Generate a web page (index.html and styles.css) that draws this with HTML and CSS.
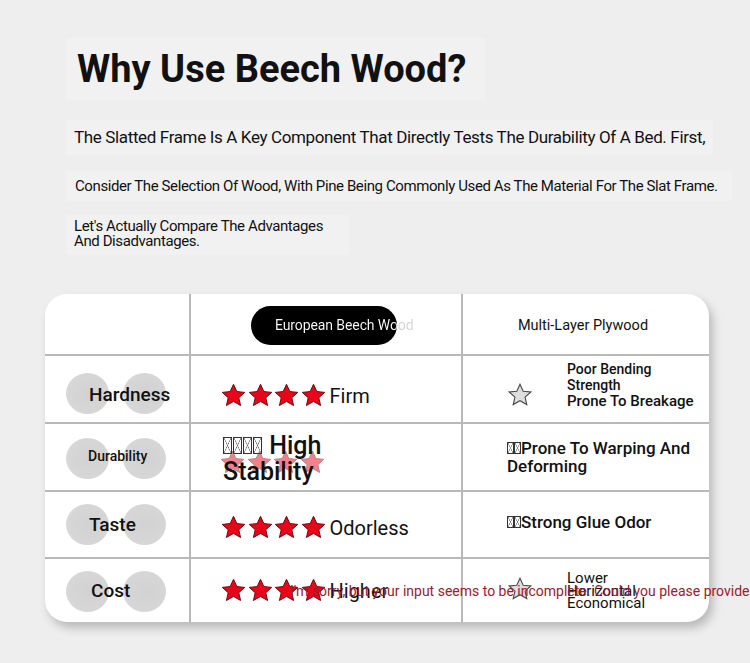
FILE: index.html
```html
<!DOCTYPE html>
<html lang="en">
<head>
<meta charset="utf-8">
<title>Why Use Beech Wood?</title>
<link rel="stylesheet" href="styles.css">
</head>
<body>
<svg class="defs" width="0" height="0" aria-hidden="true">
  <defs>
    <symbol id="star" viewBox="0 0 24 24">
      <path d="M12 1.2l3.2 7 7.6.8-5.7 5.1 1.7 7.5L12 17.7l-6.8 3.9 1.7-7.5L1.2 9l7.6-.8z"/>
    </symbol>
  </defs>
</svg>
<main class="page">
  <h1 class="title">Why Use Beech Wood?</h1>
  <p class="p1">The Slatted Frame Is A Key Component That Directly Tests The Durability Of A Bed. First,</p>
  <p class="p2">Consider The Selection Of Wood, With Pine Being Commonly Used As The Material For The Slat Frame.</p>
  <p class="p3">Let's Actually Compare The Advantages<br>And Disadvantages.</p>

  <section class="card">
    <div class="cell head c1"></div>
    <div class="cell head c2"><span class="pill"><span class="pill-text">European Beech Wood</span></span></div>
    <div class="cell head c3">Multi-Layer Plywood</div>

    <div class="cell label r1"><span class="blob b1"></span><span class="blob b2"></span><span class="lt big">Hardness</span></div>
    <div class="cell rate r1">
      <span class="stars"><svg class="st red"><use href="#star"/></svg><svg class="st red"><use href="#star"/></svg><svg class="st red"><use href="#star"/></svg><svg class="st red"><use href="#star"/></svg></span>
      <span class="rt">Firm</span>
    </div>
    <div class="cell ply r1">
      <svg class="st gray"><use href="#star"/></svg>
      <span class="ptxt"><span class="sm">Poor Bending<br>Strength</span><br><span class="md">Prone To Breakage</span></span>
    </div>

    <div class="cell label r2"><span class="blob b1"></span><span class="blob b2"></span><span class="lt small">Durability</span></div>
    <div class="cell rate r2">
      <span class="stars faded"><svg class="st red"><use href="#star"/></svg><svg class="st red"><use href="#star"/></svg><svg class="st red"><use href="#star"/></svg><svg class="st red"><use href="#star"/></svg></span>
      <span class="hs"><span class="tofu"></span><span class="tofu"></span><span class="tofu"></span><span class="tofu"></span> High<br>Stability</span>
    </div>
    <div class="cell ply r2"><span class="pt17"><span class="tofu s"></span><span class="tofu s"></span>Prone To Warping And<br>Deforming</span></div>

    <div class="cell label r3"><span class="blob b1"></span><span class="blob b2"></span><span class="lt big">Taste</span></div>
    <div class="cell rate r3">
      <span class="stars"><svg class="st red"><use href="#star"/></svg><svg class="st red"><use href="#star"/></svg><svg class="st red"><use href="#star"/></svg><svg class="st red"><use href="#star"/></svg></span>
      <span class="rt">Odorless</span>
    </div>
    <div class="cell ply r3"><span class="pt17"><span class="tofu s"></span><span class="tofu s"></span>Strong Glue Odor</span></div>

    <div class="cell label r4"><span class="blob b1"></span><span class="blob b2"></span><span class="lt big cost">Cost</span></div>
    <div class="cell rate r4">
      <span class="stars"><svg class="st red"><use href="#star"/></svg><svg class="st red"><use href="#star"/></svg><svg class="st red"><use href="#star"/></svg><svg class="st red"><use href="#star"/></svg></span>
      <span class="rt">Higher</span>
    </div>
    <div class="cell ply r4">
      <svg class="st gray"><use href="#star"/></svg>
      <span class="low">Lower<br>Horizontal<br>Economical</span>
    </div>

    <p class="err">I'm sorry, but your input seems to be incomplete. Could you please provide more details?</p>
  </section>
</main>
</body>
</html>
```

FILE: styles.css
```css
html, body {
  margin: 0;
  padding: 0;
  background: #eeeeee;
  overflow: hidden;
}
body {
  width: 750px;
  height: 663px;
  font-family: Roboto, "Liberation Sans", sans-serif;
  color: #111;
}
.defs { position: absolute; width: 0; height: 0; }

.page {
  padding-top: 38px;
  display: flex;
  flex-direction: column;
  align-items: flex-start;
}
.title {
  margin: 0 0 0 66px;
  padding: 0 19px 0 11px;
  font-size: 38px;
  font-weight: 700;
  line-height: 62px;
  background: #f1f1f1;
}
.p1 {
  margin: 20px 0 0 66px;
  padding: 0 8px;
  font-size: 17px;
  line-height: 35px;
  letter-spacing: -0.36px;
  background: #f1f1f1;
}
.p2 {
  margin: 16px 0 0 66px;
  padding: 0 14px 0 9px;
  font-size: 15px;
  line-height: 30px;
  letter-spacing: -0.4px;
  background: #f1f1f1;
}
.p3 {
  margin: 14px 0 0 66px;
  padding: 4px 26px 6px 8px;
  font-size: 15px;
  line-height: 15px;
  letter-spacing: -0.4px;
  background: #f1f1f1;
}

.card {
  position: relative;
  margin: 39px 0 0 45px;
  width: 664px;
  height: 328px;
  background: #fff;
  border-radius: 22px;
  box-shadow: 4px 6px 10px rgba(0, 0, 0, 0.22);
  display: grid;
  grid-template-columns: 146px 272px 1fr;
  grid-template-rows: 62px 68px 68px 67px 1fr;
}
.cell {
  box-sizing: border-box;
  position: relative;
  border-color: #b9b9b9;
  border-style: solid;
  border-width: 0 2px 2px 0;
}
.cell.c3, .cell.ply { border-right-width: 0; }
.cell.r4 { border-bottom-width: 0; }

/* header */
.head.c2 {
  display: flex;
  align-items: center;
  padding: 2px 0 0 60px;
}
.pill {
  display: flex;
  align-items: center;
  width: 146px;
  height: 39px;
  border-radius: 20px;
  background: #000;
  box-sizing: border-box;
  padding-left: 24px;
  white-space: nowrap;
}
.pill-text {
  font-size: 14px;
  letter-spacing: -0.1px;
  background: linear-gradient(to right, #fff 0, #fff 120px, #d4d4d4 120px);
  -webkit-background-clip: text;
  background-clip: text;
  color: transparent;
}
.head.c3 {
  display: flex;
  align-items: center;
  justify-content: center;
  padding: 2px 6px 0 0;
  font-size: 14.5px;
}

/* label column */
.label { padding-left: 44px; }
.blob {
  position: absolute;
  width: 43px;
  height: 41px;
  border-radius: 50%;
  background: radial-gradient(circle at 55% 50%, #d2d2d2 0, #d6d6d6 60%, #dcdcdc 100%);
}
.b1 { left: 21px; }
.b2 { left: 78px; }
.label.r1 .blob { top: 17px; }
.label.r2 .blob { top: 14px; }
.label.r3 .blob { top: 12px; }
.label.r4 .blob { top: 12px; }
.lt { position: relative; display: block; }
.lt.big { font-size: 19px; line-height: 22px; font-weight: 500; }
.lt.small { font-size: 14px; line-height: 16px; font-weight: 500; margin-left: -1px; }
.lt.cost { margin-left: 2px; }
.label.r1 { padding-top: 28px; }
.label.r2 { padding-top: 24px; }
.label.r3 { padding-top: 22px; }
.label.r4 { padding-top: 21px; }

/* rating column */
.rate {
  display: flex;
  align-items: flex-start;
  padding-left: 30px;
}
.stars { display: flex; gap: 1.5px; }
.st { width: 25px; height: 25px; display: block; }
.st.red { fill: #e8051a; stroke: #6e0008; stroke-width: 0.9; }
.st.gray { fill: #dedede; stroke: #4a4a4a; stroke-width: 1.1; width: 24px; height: 24px; }
.rt {
  margin-left: 4px;
  font-size: 20px;
  line-height: 24px;
  margin-top: 0.5px;
}
.rate.r1 { padding-top: 27px; }
.rate.r3 { padding-top: 23px; }
.rate.r4 { padding-top: 19px; }
.rate.r2 { padding-top: 9px; padding-left: 32px; }
.stars.faded {
  position: absolute;
  left: 29px;
  top: 26px;
  opacity: 0.5;
}
.hs {
  position: relative;
  font-size: 25px;
  line-height: 26px;
  font-weight: 500;
}
.tofu {
  display: inline-block;
  width: 9px;
  height: 17px;
  margin-right: 1px;
  border: 1px solid #333;
  box-sizing: border-box;
  background:
    linear-gradient(to top right, transparent calc(50% - 0.6px), #666 50%, transparent calc(50% + 0.6px)),
    linear-gradient(to bottom right, transparent calc(50% - 0.6px), #666 50%, transparent calc(50% + 0.6px));
}
.tofu.s { width: 7px; height: 12px; margin-right: 0; }

/* plywood column */
.ply { display: flex; align-items: flex-start; }
.ply.r1 { padding-left: 45px; }
.ply.r1 .st { margin-top: 27px; }
.ptxt { margin: 5px 0 0 35px; line-height: 16px; }
.sm { font-size: 14px; line-height: 16px; font-weight: 500; }
.md { font-size: 15px; line-height: 17px; font-weight: 500; }
.pt17 {
  font-size: 17px;
  line-height: 18px;
  font-weight: 500;
}
.ply.r2 { padding: 15px 0 0 44px; }
.ply.r3 { padding: 21px 0 0 44px; }
.ply.r4 { padding-left: 45px; }
.ply.r4 .st { margin-top: 18px; }
.low {
  margin: 13px 0 0 35px;
  font-size: 15px;
  line-height: 12.5px;
}

.err {
  position: absolute;
  left: 245px;
  top: 288px;
  margin: 0;
  white-space: nowrap;
  font-size: 14px;
  line-height: 18px;
  color: #96212f;
}
```
